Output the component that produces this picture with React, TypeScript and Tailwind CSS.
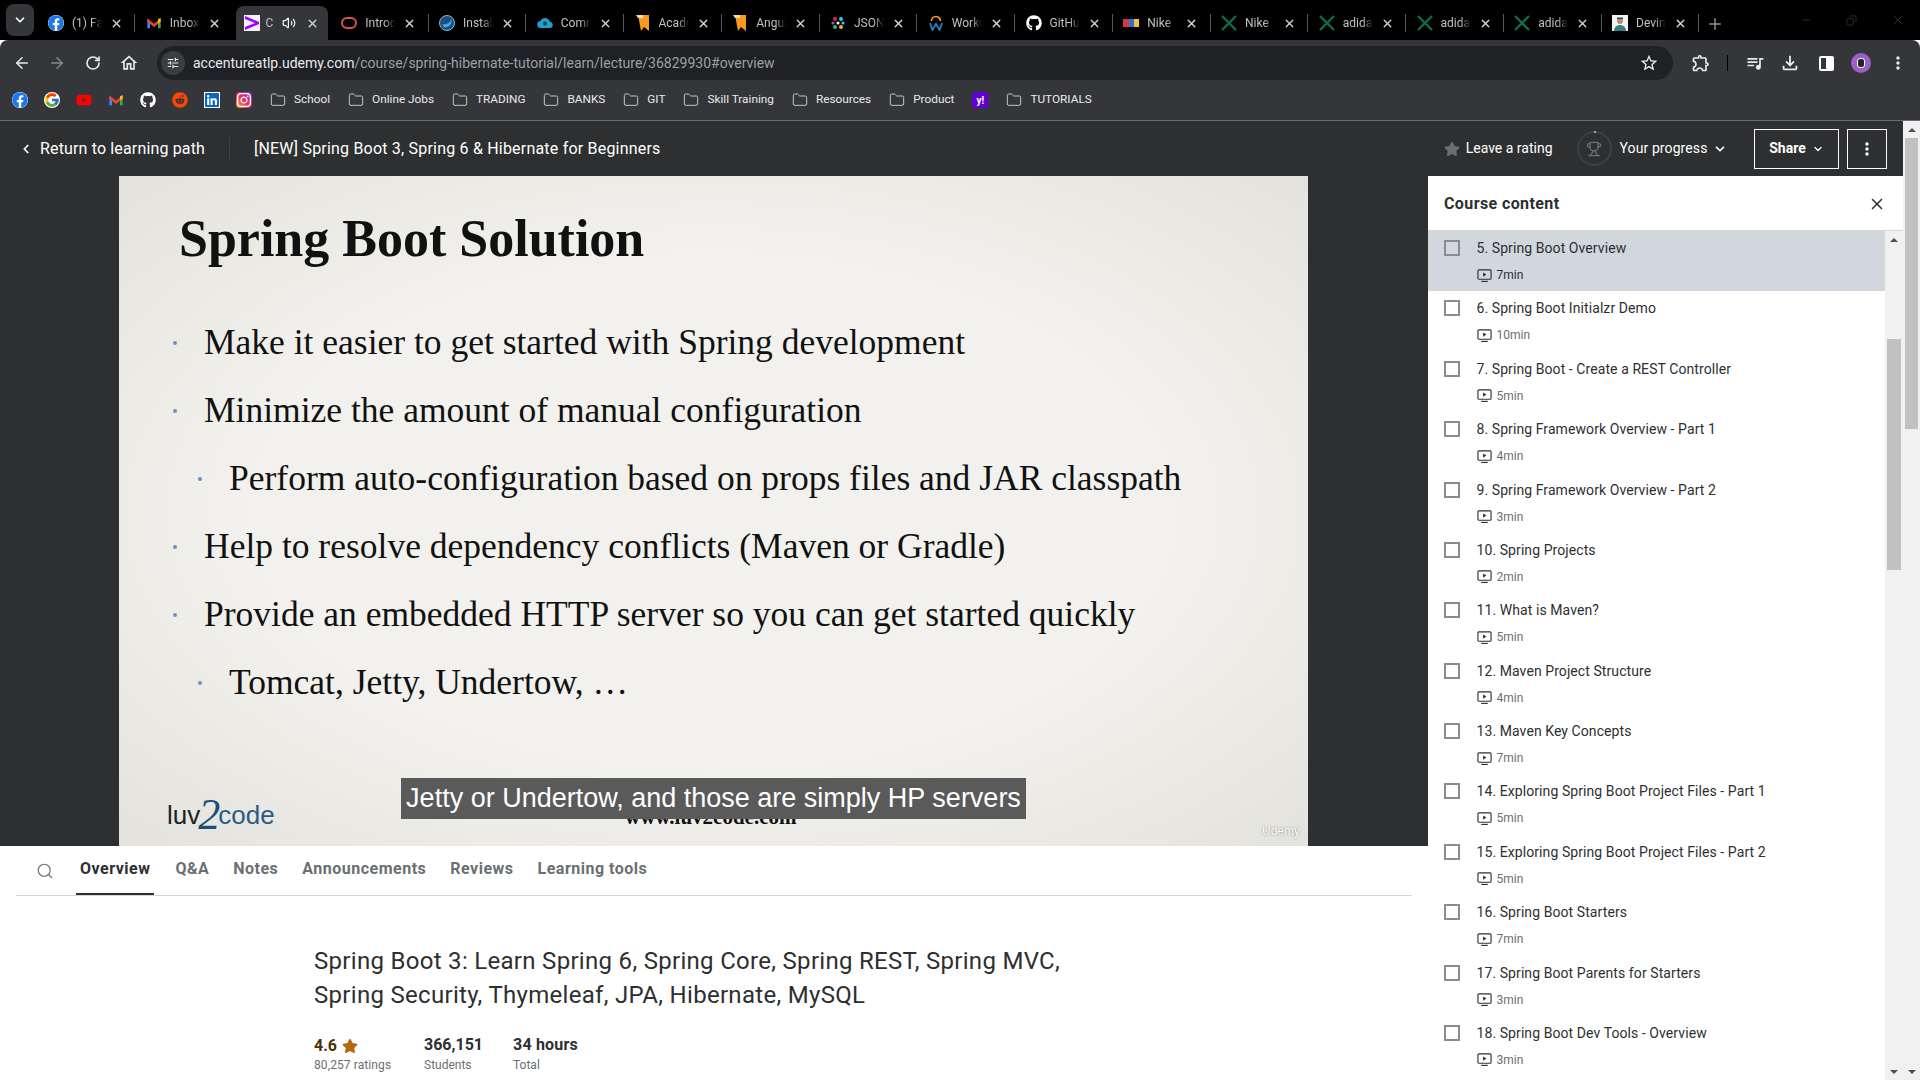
import React from "react";
import { ArrowLeft, ArrowRight, ChevronDown, ChevronLeft, Copy, Folder, Minus, Plus, RotateCw, Search, Trophy, Volume2, X } from "lucide-react";
import { FaFacebook, FaGithub, FaInstagram, FaLinkedin, FaReddit, FaStar, FaYoutube } from "react-icons/fa";
import { FcGoogle } from "react-icons/fc";
import { MdMoreVert, MdOutlineExtension, MdOutlineFileDownload, MdOutlineHome, MdOutlineQueueMusic, MdStarBorder, MdTune } from "react-icons/md";

const GmailIcon = () => (
  <svg viewBox="0 0 24 24" className="w-4 h-4">
    <path d="M2 6v14h4V10z" fill="#4285f4" />
    <path d="M22 6v14h-4V10z" fill="#34a853" />
    <path d="M2 5l10 8 10-8v5l-10 8L2 10z" fill="#ea4335" />
    <path d="M18 6l4-1v5l-4 3z" fill="#fbbc04" />
  </svg>
);

const Favicons: Record<string, React.ReactNode> = {
  facebook: <FaFacebook className="w-4 h-4 text-[#1877f2] bg-white rounded-full" />,
  gmail: <GmailIcon />,
  accenture: (
    <svg viewBox="0 0 16 16" className="w-4 h-4">
      <rect width="16" height="16" fill="#f4f0fa" />
      <path d="M1 1l14 6v2L1 15v-3l10-4L1 4z" fill="#a100ff" />
    </svg>
  ),
  oracle: <span className="w-4 h-3 rounded-[6px] border-2 border-[#d9534a]" />,
  docker: (
    <svg viewBox="0 0 16 16" className="w-4 h-4">
      <circle cx="8" cy="8" r="7.5" fill="#1c4f7c" stroke="#8fb3cf" />
      <path d="M3 9c3 1 7 0 10-5 0 6-4 9-8 8z" fill="#43a6e0" />
    </svg>
  ),
  cloud: (
    <svg viewBox="0 0 16 16" className="w-4 h-4">
      <path d="M4 13a3.5 3.5 0 0 1-.5-7 5 5 0 0 1 9.5 1 3 3 0 0 1-.5 6z" fill="#1fa0c9" />
      <circle cx="8" cy="8.5" r="2" fill="#0c3c52" />
    </svg>
  ),
  bookmark: (
    <svg viewBox="0 0 16 16" className="w-4 h-4">
      <path d="M3 0h11v16l-5-4-3 4z" fill="#f59a23" />
      <path d="M1 0h7v3H3z" fill="#fcd9a0" />
    </svg>
  ),
  json: (
    <svg viewBox="0 0 16 16" className="w-4 h-4">
      <circle cx="5" cy="4" r="2" fill="#e01e5a" />
      <circle cx="11" cy="4" r="2" fill="#36c5f0" />
      <circle cx="5" cy="12" r="2" fill="#2eb67d" />
      <circle cx="11" cy="12" r="2" fill="#ecb22e" />
      <circle cx="3" cy="8" r="1.6" fill="#7b5ea7" />
      <circle cx="13" cy="8" r="1.6" fill="#36c5f0" />
      <circle cx="8" cy="8" r="1.5" fill="#ffffff" />
    </svg>
  ),
  workday: (
    <svg viewBox="0 0 16 16" className="w-4 h-4">
      <path d="M3.5 6a4.5 4.5 0 0 1 9 0" fill="none" stroke="#f5a623" strokeWidth="1.6" />
      <path d="M2 8l2.5 7L8 9l3.5 6L14 8" fill="none" stroke="#2c7fc2" strokeWidth="1.8" />
    </svg>
  ),
  github: <FaGithub className="w-4 h-4 text-white" />,
  nike: (
    <span className="flex w-4 h-2">
      <span className="flex-1 bg-[#d9363e]" />
      <span className="flex-1 bg-[#2f6fd6]" />
      <span className="flex-1 bg-[#f1c232]" />
    </span>
  ),
  excel: (
    <svg viewBox="0 0 16 16" className="w-4 h-4">
      <path d="M1 1l14 14M15 1L1 15" stroke="#0f6b4a" strokeWidth="2.4" />
    </svg>
  ),
  devin: (
    <svg viewBox="0 0 16 16" className="w-4 h-4">
      <rect width="16" height="16" fill="#f3f3f3" />
      <circle cx="8" cy="6" r="3" fill="#b98a6e" />
      <path d="M5 4h6V2.500H5z" fill="#23424f" />
      <path d="M2 16c0-4 3-6 6-6s6 2 6 6z" fill="#3a7f88" />
    </svg>
  ),
};

const tabs = [
  { icon: "facebook", title: "(1) Facebook" },
  { icon: "gmail", title: "Inbox" },
  { icon: "accenture", title: "C", active: true },
  { icon: "oracle", title: "Introduction" },
  { icon: "docker", title: "Install" },
  { icon: "cloud", title: "Community" },
  { icon: "bookmark", title: "Academy" },
  { icon: "bookmark", title: "Angular" },
  { icon: "json", title: "JSON" },
  { icon: "workday", title: "Workday" },
  { icon: "github", title: "GitHub" },
  { icon: "nike", title: "Nike" },
  { icon: "excel", title: "Nike" },
  { icon: "excel", title: "adidas" },
  { icon: "excel", title: "adidas" },
  { icon: "excel", title: "adidas" },
  { icon: "devin", title: "Devin" },
];

const bookmarkIcons = [
  <FaFacebook key="f" className="w-4 h-4 text-[#1877f2] bg-white rounded-full" />,
  <FcGoogle key="g" className="w-4 h-4 bg-white rounded-full" />,
  <FaYoutube key="y" className="w-4 h-4 text-[#ff0000]" />,
  <GmailIcon key="m" />,
  <FaGithub key="gh" className="w-4 h-4 text-white" />,
  <FaReddit key="r" className="w-4 h-4 text-[#ff4500]" />,
  <FaLinkedin key="l" className="w-4 h-4 text-[#0a66c2] bg-white" />,
  <FaInstagram key="i" className="w-4 h-4 text-white rounded-[4px] bg-[linear-gradient(45deg,#f9a825,#e1306c,#833ab4)]" />,
];

const lectures = [
  { title: "5. Spring Boot Overview", time: "7min", current: true },
  { title: "6. Spring Boot Initialzr Demo", time: "10min" },
  { title: "7. Spring Boot - Create a REST Controller", time: "5min" },
  { title: "8. Spring Framework Overview - Part 1", time: "4min" },
  { title: "9. Spring Framework Overview - Part 2", time: "3min" },
  { title: "10. Spring Projects", time: "2min" },
  { title: "11. What is Maven?", time: "5min" },
  { title: "12. Maven Project Structure", time: "4min" },
  { title: "13. Maven Key Concepts", time: "7min" },
  { title: "14. Exploring Spring Boot Project Files - Part 1", time: "5min" },
  { title: "15. Exploring Spring Boot Project Files - Part 2", time: "5min" },
  { title: "16. Spring Boot Starters", time: "7min" },
  { title: "17. Spring Boot Parents for Starters", time: "3min" },
  { title: "18. Spring Boot Dev Tools - Overview", time: "3min" },
];

const bullets = [
  { text: "Make it easier to get started with Spring development" },
  { text: "Minimize the amount of manual configuration" },
  { text: "Perform auto-configuration based on props files and JAR classpath", sub: true },
  { text: "Help to resolve dependency conflicts (Maven or Gradle)" },
  { text: "Provide an embedded HTTP server so you can get started quickly" },
  { text: "Tomcat, Jetty, Undertow, …", sub: true },
];

function BookmarkFolder({ label }: { label: string }) {
  return (
    <div className="flex items-center gap-2 text-[11.800px] text-[#e8eaed]">
      <Folder className="w-4 h-4 text-[#c4c7c5]" strokeWidth={1.5} />
      <span>{label}</span>
    </div>
  );
}

function ScrollArrow({ up }: { up?: boolean }) {
  return (
    <div className="h-[17px] flex items-center justify-center shrink-0">
      {up ? (
        <div className="w-0 h-0 border-x-[4px] border-x-transparent border-b-[4px] border-b-[#505050]" />
      ) : (
        <div className="w-0 h-0 border-x-[4px] border-x-transparent border-t-[4px] border-t-[#505050]" />
      )}
    </div>
  );
}

function VideoIcon() {
  return (
    <svg viewBox="0 0 16 16" className="w-[15px] h-[15px] text-[#2d2f31]" fill="none">
      <rect x="1" y="2" width="14" height="10" rx="1" stroke="currentColor" strokeWidth="1.2" />
      <path d="M6.500 4.800v4.400L10 7z" fill="currentColor" />
      <path d="M4.500 14.300h7" stroke="currentColor" strokeWidth="1.2" />
    </svg>
  );
}

export default function App() {
  return (
    <div className="w-[1920px] h-[1080px] overflow-hidden bg-white font-['Roboto',sans-serif] flex flex-col">
      {/* Browser tabs */}
      <div className="h-10 bg-black flex items-end shrink-0 relative">
        <div className="w-[28px] h-[32px] ml-[6px] mr-[6px] mb-[4px] rounded-[8px] bg-[#35363a] flex items-center justify-center">
          <ChevronDown className="w-[14px] h-[14px] text-white" strokeWidth={3} />
        </div>
        {tabs.map((tab, i) => (
          <div key={i} className="flex items-center h-[34px]">
            <div className={`w-[92px] h-[34px] pl-[8px] flex items-center rounded-t-[8px] ${tab.active ? "bg-[#35363a]" : ""}`}>
              <span className="w-4 h-4 flex items-center justify-center shrink-0">{Favicons[tab.icon]}</span>
              <span className={`${tab.active ? "w-[10px] ml-[6px] mr-[6px]" : "w-[30px] ml-[8px]"} text-[12px] whitespace-nowrap overflow-hidden text-[#bdc1c6] [mask-image:linear-gradient(to_right,black_65%,transparent)]`}>{tab.title}</span>
              {tab.active && <Volume2 className="w-[14px] h-[14px] text-white shrink-0" />}
              <X className={`w-[13px] h-[13px] text-[#d5d7da] shrink-0 ${tab.active ? "ml-[10px]" : "ml-[8px]"}`} strokeWidth={2.5} />
            </div>
            <div className="w-[5.750px] flex justify-center">
              {i !== 1 && i !== 2 && <div className="w-[1px] h-[18px] bg-[#55585c]" />}
            </div>
          </div>
        ))}
        <Plus className="w-[18px] h-[18px] text-[#8f9296] ml-[4px] mb-[7px]" />
        <div className="ml-auto flex items-center h-10 gap-[34px] pr-[15px] text-[#55575a]">
          <Minus className="w-[12px] h-[12px]" strokeWidth={1} />
          <Copy className="w-[11px] h-[11px] -scale-x-100" strokeWidth={1} />
          <X className="w-[14px] h-[14px]" strokeWidth={1} />
        </div>
      </div>

      {/* Browser toolbar */}
      <div className="h-10 bg-[#35363a] rounded-t-[8px] flex shrink-0 text-[#e8eaed]">
        <div className="w-[157px] flex items-center pt-[6px] pl-[13px] shrink-0">
          <ArrowLeft className="w-[18px] h-[18px]" />
          <ArrowRight className="w-[18px] h-[18px] text-[#85878a] ml-[17px]" />
          <RotateCw className="w-[16px] h-[16px] ml-[19px]" strokeWidth={2.5} />
          <MdOutlineHome className="w-5 h-5 ml-[18px]" />
        </div>
        <div className="mt-[6px] h-[34px] w-[1516px] rounded-full bg-[#202124] flex items-center pl-[4px] pr-[14px]">
          <div className="w-[24px] h-[24px] rounded-full bg-[#3c3d41] flex items-center justify-center mr-[8px]">
            <MdTune className="w-[14px] h-[14px]" />
          </div>
          <span className="text-[14px]">accentureatlp.udemy.com<span className="text-[#9aa0a6]">/course/spring-hibernate-tutorial/learn/lecture/36829930#overview</span></span>
          <MdStarBorder className="w-5 h-5 ml-auto" />
        </div>
        <div className="flex items-center pt-[6px] pl-[18px]">
          <MdOutlineExtension className="w-5 h-5" />
          <div className="w-[1px] h-[16px] bg-black ml-[16px] mr-[17px]" />
          <MdOutlineQueueMusic className="w-5 h-5" />
          <MdOutlineFileDownload className="w-[22px] h-[22px] ml-[14px]" />
          <div className="w-[15px] h-[15px] ml-[18px] rounded-[2px] border-2 border-white flex justify-end">
            <div className="w-[6px] bg-white" />
          </div>
          <div className="w-5 h-5 rounded-full bg-[#9c5fc9] ml-[17px] flex items-center justify-center">
            <div className="w-[8px] h-[10px] rounded-[3px] bg-[#23232a] border border-white" />
          </div>
          <MdMoreVert className="w-5 h-5 ml-[17px]" />
        </div>
      </div>

      {/* Bookmarks bar */}
      <div className="h-[41px] bg-[#35363a] border-b border-[#6a6c6f] flex items-center pl-[12px] shrink-0">
        <div className="flex items-center gap-4">{bookmarkIcons}</div>
        <div className="flex items-center gap-[18px] ml-[18px]">
          {["School", "Online Jobs", "TRADING", "BANKS", "GIT", "Skill Training", "Resources", "Product"].map((b) => (
            <BookmarkFolder key={b} label={b} />
          ))}
          <div className="w-4 h-4 rounded-[2px] bg-[#5f01d1] text-white text-[10px] font-bold flex items-center justify-center">y!</div>
          <BookmarkFolder label="TUTORIALS" />
        </div>
      </div>

      <div className="flex flex-1 min-h-0">
        <div className="w-[1903px] flex flex-col">
          {/* Course header */}
          <div className="h-[55px] bg-[#2d2f31] flex items-center text-white shrink-0">
            <div className="w-[230px] flex items-center pl-[19px] h-[24px] border-r border-[#3e4143]">
              <ChevronLeft className="w-[14px] h-[14px] mr-[7px]" strokeWidth={3} />
              <span className="text-[16px] tracking-[0.150px]">Return to learning path</span>
            </div>
            <span className="text-[16px] ml-[24px] tracking-[0.2px]">[NEW] Spring Boot 3, Spring 6 &amp; Hibernate for Beginners</span>
            <div className="ml-auto flex items-center pr-[16px]">
              <FaStar className="w-4 h-4 text-[#6a6f73]" />
              <span className="text-[14px] ml-[6px]">Leave a rating</span>
              <div className="relative w-[35px] h-[35px] rounded-full border-2 border-[#3e4143] flex items-center justify-center ml-[24px]">
                <Trophy className="w-4 h-4 text-[#6a6f73]" />
                <div className="absolute top-[-2px] left-[15px] w-[2px] h-[2px] bg-[#9da3a7]" />
              </div>
              <span className="text-[14px] ml-[8px] tracking-[0.1px]">Your progress</span>
              <ChevronDown className="w-[14px] h-[14px] ml-[5.500px]" strokeWidth={3} />
              <div className="w-[85px] h-10 border border-white flex items-center justify-center ml-[27px] gap-[6px]">
                <span className="text-[14px] font-bold">Share</span>
                <ChevronDown className="w-[12px] h-[12px]" strokeWidth={2.5} />
              </div>
              <div className="w-10 h-10 border border-white flex items-center justify-center ml-[8px]">
                <MdMoreVert className="w-5 h-5" />
              </div>
            </div>
          </div>

          <div className="flex flex-1 min-h-0">
            <div className="w-[1428px] flex flex-col shrink-0">
              {/* Video */}
              <div className="h-[670px] bg-[#2d2f31] pl-[119px] pr-[119px] shrink-0">
                <div className="relative h-full w-[1189px] bg-[radial-gradient(ellipse_at_center,#f2f1ed_55%,#e3e2dc_100%)] font-['Liberation_Serif',serif] text-[#111111] flex flex-col pl-[60px]">
                  <h1 className="text-[52px] leading-[60px] font-bold mt-[33px] mb-[40px]">Spring Boot Solution</h1>
                  <div className="flex flex-col">
                    {bullets.map((b) => (
                      <div key={b.text} className={`h-[68px] flex items-center text-[35.500px] whitespace-nowrap ${b.sub ? "pl-[25px]" : ""}`}>
                        <span className="w-[4px] h-[4px] rounded-full bg-[#6f8fc0] -ml-[6px] mr-[27px] shrink-0" />
                        {b.text}
                      </div>
                    ))}
                  </div>
                  <div className="mt-auto flex items-center h-[62px] -ml-[12px] pr-[8px]">
                    <div className="flex items-center w-[110px] font-['Liberation_Sans',sans-serif] text-[26px] leading-none">
                      <span className="text-[#222222]">luv</span>
                      <span className="font-['Liberation_Serif',serif] italic text-[44px] text-[#1d4f7a] -mx-[2px]">2</span>
                      <span className="text-[#2a5d86]">code</span>
                    </div>
                    <span className="ml-[348px] pt-[2px] text-[21px] font-bold relative top-[2px]">www.luv2code.com</span>
                    <span className="ml-auto self-end mb-[6px] text-[12px] text-white font-['Liberation_Sans',sans-serif] [text-shadow:0_0_2px_#777]">Udemy</span>
                  </div>
                  <div className="absolute left-[282px] top-[602px] w-[625px] h-[41px] bg-[#5a5a5a] flex items-center justify-center font-['Liberation_Sans',sans-serif] text-[27px] text-white whitespace-nowrap">
                    Jetty or Undertow, and those are simply HP servers
                  </div>
                </div>
              </div>

              {/* Tabs */}
              <div className="mx-[16px] h-[50px] border-b border-[#d1d7dc] flex items-center text-[16px] font-bold tracking-[0.5px] text-[#6a6f73] shrink-0">
                <Search className="w-[18px] h-[18px] ml-[20px] mr-[22px]" strokeWidth={1.5} />
                <div className="flex h-full">
                  <div className="h-full px-[4px] pb-[2px] flex items-center text-[#2d2f31] border-b-2 border-b-[#2d2f31] mr-[21px]">Overview</div>
                  {["Q&A", "Notes", "Announcements", "Reviews", "Learning tools"].map((t) => (
                    <div key={t} className="h-full flex items-center mr-[24px] pb-[3px]">{t}</div>
                  ))}
                </div>
              </div>

              {/* Overview */}
              <div className="pl-[314px] pt-[48px]">
                <h2 className="text-[24px] leading-[34px] tracking-[0.3px] text-[#2d2f31] w-[800px]">Spring Boot 3: Learn Spring 6, Spring Core, Spring REST, Spring MVC, Spring Security, Thymeleaf, JPA, Hibernate, MySQL</h2>
                <div className="flex mt-[22px]">
                  <div className="w-[110px]">
                    <div className="flex items-center gap-[5px] text-[16px] font-bold text-[#4d3105] h-[24px]">
                      4.6 <FaStar className="w-4 h-4 text-[#b4690e]" />
                    </div>
                    <div className="text-[12px] tracking-[0.1px] text-[#6a6f73] -mt-[2px]">80,257 ratings</div>
                  </div>
                  <div className="w-[89px]">
                    <div className="text-[16px] font-bold text-[#2d2f31] h-[24px] leading-[22px]">366,151</div>
                    <div className="text-[12px] text-[#6a6f73] -mt-[2px]">Students</div>
                  </div>
                  <div>
                    <div className="text-[16px] font-bold tracking-[0.2px] text-[#2d2f31] h-[24px] leading-[22px]">34 hours</div>
                    <div className="text-[12px] text-[#6a6f73] -mt-[2px]">Total</div>
                  </div>
                </div>
              </div>
            </div>

            {/* Sidebar */}
            <div className="w-[475px] flex flex-col bg-white">
              <div className="h-[55px] border-b border-[#d1d7dc] flex items-center justify-between pt-[2px] pl-[16px] pr-[17px] shrink-0">
                <span className="text-[16px] font-bold tracking-[0.4px] text-[#2d2f31]">Course content</span>
                <X className="w-[18px] h-[18px] text-[#2d2f31]" strokeWidth={2} />
              </div>
              <div className="flex flex-1 min-h-0">
                <div className="w-[457px] shrink-0">
                  {lectures.map((l) => (
                    <div key={l.title} className={`h-[60.380px] flex pl-[16px] ${l.current ? "bg-[#d1d7dc]" : ""}`}>
                      <div className="w-4 h-4 mt-[9px] border-2 border-[#8a8c8e] shrink-0" />
                      <div className="ml-[16.500px] flex flex-col">
                        <span className="text-[14px] leading-[20px] tracking-[0.080px] mt-[7px] text-[#2d2f31]">{l.title}</span>
                        <div className={`flex items-center gap-[5px] text-[12px] mt-[8px] ${l.current ? "text-[#2d2f31]" : "text-[#6a6f73]"}`}>
                          <VideoIcon />
                          {l.time}
                        </div>
                      </div>
                    </div>
                  ))}
                </div>
                <div className="w-[18px] bg-[#f1f1f1] flex flex-col">
                  <ScrollArrow up />
                  <div className="mt-[91px] h-[231px] mx-[2px] bg-[#c1c1c1]" />
                  <div className="flex-1" />
                  <ScrollArrow />
                </div>
              </div>
            </div>
          </div>
        </div>

        {/* Page scrollbar */}
        <div className="w-[17px] bg-[#f1f1f1] flex flex-col">
          <ScrollArrow up />
          <div className="h-[291px] mx-[2px] bg-[#c1c1c1]" />
          <div className="flex-1" />
          <ScrollArrow />
        </div>
      </div>
    </div>
  );
}
